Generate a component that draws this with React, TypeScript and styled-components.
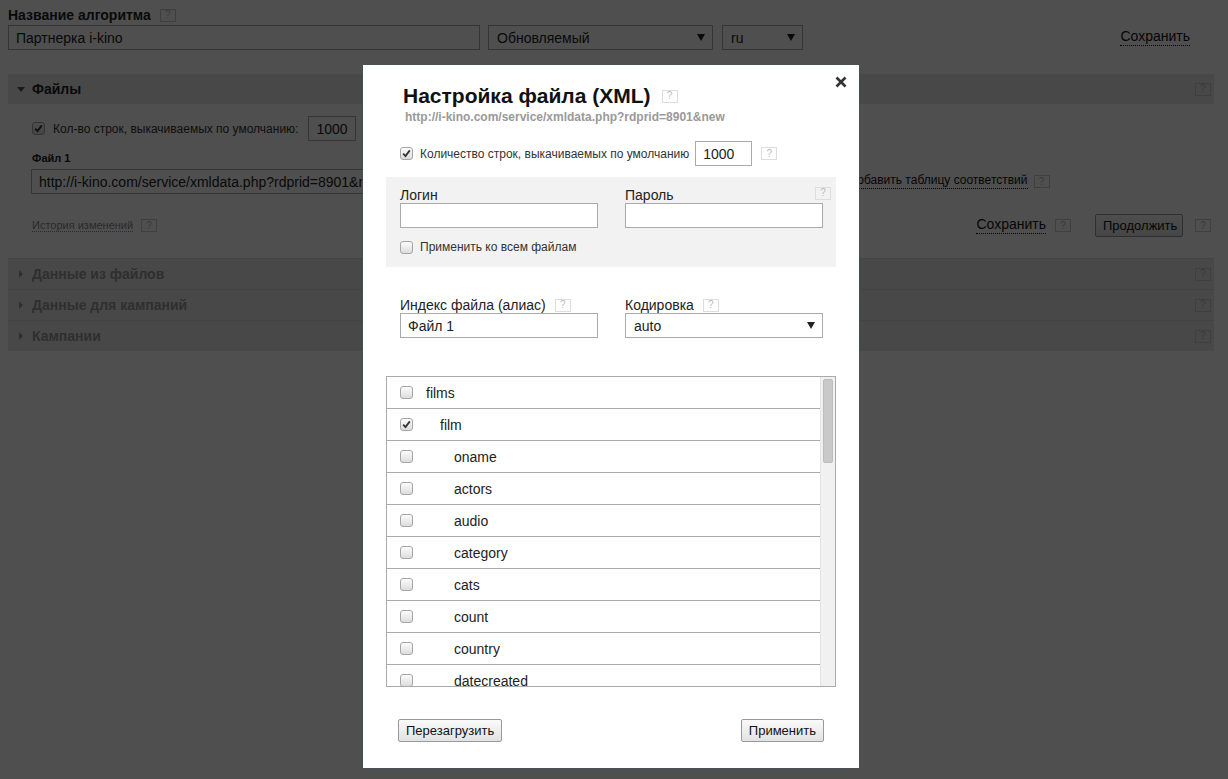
import styled, { createGlobalStyle } from "styled-components";

const Global = createGlobalStyle`
	html, body {
		margin: 0;
		padding: 0;
		background: #fff;
	}
	body {
		font-family: "Liberation Sans", Arial, sans-serif;
		color: #000;
	}
`;

const Page = styled.div`
	position: relative;
	width: 1228px;
	height: 779px;
	overflow: hidden;
	box-sizing: border-box;
	padding: 6px 14px 0 8px;
	background: #fff;
`;

const FieldTitle = styled.div`
	display: flex;
	align-items: center;
	gap: 9px;
	font-size: 14px;
	font-weight: bold;
	line-height: 18px;
	color: #222;
`;

const Help = styled.span<{ $light?: boolean }>`
	display: inline-flex;
	align-items: center;
	justify-content: center;
	box-sizing: border-box;
	width: 16px;
	height: 13px;
	border: 1px solid ${(p) => (p.$light ? "#ddd" : "#ccc")};
	font-size: 10px;
	line-height: 1;
	font-weight: normal;
	color: #bbb;
	flex-shrink: 0;
`;

const AlgoRow = styled.div`
	display: flex;
	align-items: center;
	margin-top: 1px;
	gap: 8px;
`;

const TextInput = styled.div<{ $w: number; $size?: number }>`
	box-sizing: border-box;
	width: ${(p) => p.$w}px;
	height: 25px;
	border: 1px solid #aaa;
	background: #fff;
	padding: 0 7px;
	display: flex;
	align-items: center;
	font-size: ${(p) => p.$size || 14}px;
	color: #222;
	white-space: nowrap;
	overflow: hidden;
	flex-shrink: 0;
`;

const Select = styled(TextInput)`
	justify-content: space-between;
	padding: 0 7px 0 8px;
	&::after {
		content: "";
		border-left: 4px solid transparent;
		border-right: 4px solid transparent;
		border-top: 7px solid #222;
	}
`;

const DottedLink = styled.span<{ $size?: number; $gray?: boolean }>`
	font-size: ${(p) => p.$size || 14}px;
	color: ${(p) => (p.$gray ? "#888" : "#111")};
	border-bottom: 1px dotted ${(p) => (p.$gray ? "#888" : "#111")};
	line-height: 1.1;
	white-space: nowrap;
`;

const Spacer = styled.div`
	flex: 1;
`;

const SectionBar = styled.div<{ $open?: boolean }>`
	box-sizing: border-box;
	height: ${(p) => (p.$open ? 30 : 31)}px;
	background: #e8e8e8;
	border-top: ${(p) => (p.$open ? "none" : "1px solid #d8d8d8")};
	display: flex;
	align-items: center;
	padding: 0 3px 0 9px;
	gap: 7px;
	font-size: 14px;
	font-weight: bold;
	color: ${(p) => (p.$open ? "#222" : "#999")};
`;

const Arrow = styled.span<{ $open?: boolean }>`
	width: 8px;
	display: inline-flex;
	justify-content: center;
	&::before {
		content: "";
		${(p) =>
			p.$open
				? "border-left: 4px solid transparent; border-right: 4px solid transparent; border-top: 5px solid #555;"
				: "border-top: 4px solid transparent; border-bottom: 4px solid transparent; border-left: 4px solid #999;"}
	}
`;

const SectionsWrap = styled.div`
	margin-top: 24px;
`;

const FilesBody = styled.div`
	padding: 12px 3px 21px 24px;
`;

const Row = styled.div<{ $gap?: number; $mt?: number }>`
	display: flex;
	align-items: center;
	gap: ${(p) => p.$gap ?? 8}px;
	margin-top: ${(p) => p.$mt ?? 0}px;
`;

const SmallLabel = styled.span<{ $color?: string }>`
	font-size: 12px;
	color: ${(p) => p.$color || "#333"};
	white-space: nowrap;
`;

const FileLabel = styled.div`
	font-size: 11px;
	font-weight: bold;
	color: #222;
	margin-top: 10px;
	line-height: 14px;
`;

const Box = styled.span`
	box-sizing: border-box;
	width: 13px;
	height: 13px;
	border: 1px solid #a6a6a6;
	border-radius: 3px;
	background: linear-gradient(#fcfcfc, #dcdcdc);
	display: inline-flex;
	align-items: center;
	justify-content: center;
	flex-shrink: 0;
`;

function Check({ checked }: { checked?: boolean }) {
	return (
		<Box>
			{checked && (
				<svg width="9" height="9" viewBox="0 0 9 9">
					<path d="M1.2 4.6 L3.5 7 L7.8 1.4" fill="none" stroke="#333" strokeWidth="1.8" />
				</svg>
			)}
		</Box>
	);
}

const Button = styled.button<{ $w?: number }>`
	box-sizing: border-box;
	height: 23px;
	${(p) => (p.$w ? `width: ${p.$w}px;` : "")}
	padding: 0 7px;
	border: 1px solid #999;
	border-radius: 2px;
	background: linear-gradient(#fafafa, #e2e2e2);
	font-family: "Liberation Sans", Arial, sans-serif;
	font-size: 13px;
	color: #111;
	white-space: nowrap;
`;

const Overlay = styled.div`
	position: absolute;
	inset: 0;
	background: rgba(0, 0, 0, 0.69);
`;

const Modal = styled.div`
	position: absolute;
	left: 363px;
	top: 65px;
	width: 496px;
	height: 703px;
	box-sizing: border-box;
	background: #fff;
	box-shadow: 0 0 0 1px rgba(70, 80, 90, 0.6);
	padding: 19px 23px 0 23px;
`;

const Close = styled.span`
	position: absolute;
	right: 12px;
	top: 9px;
	width: 12px;
	height: 12px;
`;

const ModalTitle = styled.div`
	display: flex;
	align-items: center;
	gap: 11px;
	padding-left: 17px;
	font-size: 21px;
	font-weight: bold;
	line-height: 24px;
	color: #111;
`;

const ModalUrl = styled.div`
	margin-top: 2px;
	padding-left: 19px;
	font-size: 12px;
	font-weight: bold;
	color: #999;
	line-height: 14px;
`;

const GrayBox = styled.div`
	margin-top: 11px;
	background: #f2f2f2;
	height: 90px;
	box-sizing: border-box;
	padding: 10px 13px 0 14px;
	position: relative;
`;

const Corner = styled.div`
	position: absolute;
	right: 5px;
	top: 5px;
`;

const Fields = styled.div`
	display: grid;
	grid-template-columns: 198px 198px;
	column-gap: 27px;
`;

const Field = styled.div`
	display: flex;
	flex-direction: column;
`;

const FieldLabel = styled.div`
	display: flex;
	align-items: center;
	gap: 9px;
	font-size: 14px;
	color: #222;
	line-height: 16px;
`;

const ListBox = styled.div`
	margin-top: 38px;
	height: 311px;
	box-sizing: border-box;
	border: 1px solid #aaa;
	display: flex;
	overflow: hidden;
`;

const Rows = styled.div`
	flex: 1;
	overflow: hidden;
`;

const ListRow = styled.div<{ $level: number }>`
	box-sizing: border-box;
	height: 32px;
	border-bottom: 1px solid #aaa;
	display: flex;
	align-items: center;
	padding-left: 13px;
	font-size: 14px;
	color: #222;
	span:last-child {
		margin-left: ${(p) => 13 + p.$level * 14}px;
	}
`;

const Scroll = styled.div`
	width: 15px;
	background: #f1f1f1;
	border-left: 1px solid #e3e3e3;
	padding: 2px 2px 0 2px;
	box-sizing: border-box;
	&::before {
		content: "";
		display: block;
		height: 84px;
		background: #c9c9c9;
		border: 1px solid #bcbcbc;
		border-radius: 2px;
		box-sizing: border-box;
	}
`;

const ButtonRow = styled.div`
	display: flex;
	justify-content: space-between;
	margin-top: 32px;
	padding: 0 12px;
`;

const items: [string, number, boolean][] = [
	["films", 0, false],
	["film", 1, true],
	["oname", 2, false],
	["actors", 2, false],
	["audio", 2, false],
	["category", 2, false],
	["cats", 2, false],
	["count", 2, false],
	["country", 2, false],
	["datecreated", 2, false],
];

const collapsed = ["Данные из файлов", "Данные для кампаний", "Кампании"];

export default function App() {
	return (
		<Page>
			<Global />
			<FieldTitle>
				Название алгоритма <Help>?</Help>
			</FieldTitle>
			<AlgoRow>
				<TextInput $w={472}>Партнерка i-kino</TextInput>
				<Select $w={225}>Обновляемый</Select>
				<Select $w={81} style={{ marginLeft: 1 }}>
					ru
				</Select>
				<Spacer />
				<DottedLink style={{ marginRight: 24 }}>Сохранить</DottedLink>
			</AlgoRow>

			<SectionsWrap>
				<SectionBar $open>
					<Arrow $open />
					Файлы
					<Spacer />
					<Help>?</Help>
				</SectionBar>
				<FilesBody>
					<Row>
						<Check checked />
						<SmallLabel>Кол-во строк, выкачиваемых по умолчанию:</SmallLabel>
						<TextInput $w={48} style={{ marginLeft: 2 }}>
							1000
						</TextInput>
					</Row>
					<FileLabel>Файл 1</FileLabel>
					<Row $mt={4} $gap={18}>
						<TextInput $w={800} style={{ marginLeft: -1 }}>
							http://i-kino.com/service/xmldata.php?rdprid=8901&amp;new
						</TextInput>
						<DottedLink $size={12}>Добавить таблицу соответствий</DottedLink>
						<Help style={{ marginLeft: -12 }}>?</Help>
					</Row>
					<Row $mt={20}>
						<DottedLink $size={11} $gray>
							История изменений
						</DottedLink>
						<Help>?</Help>
						<Spacer />
						<DottedLink>Сохранить</DottedLink>
						<Help style={{ marginLeft: 1 }}>?</Help>
						<Button $w={88} style={{ marginLeft: 16, marginRight: 4 }}>
							Продолжить
						</Button>
						<Help>?</Help>
					</Row>
				</FilesBody>
				{collapsed.map((t) => (
					<SectionBar key={t}>
						<Arrow />
						{t}
						<Spacer />
						<Help>?</Help>
					</SectionBar>
				))}
			</SectionsWrap>

			<Overlay />

			<Modal>
				<Close>
					<svg width="12" height="12" viewBox="0 0 12 12">
						<path d="M1.5 1.5 L10.5 10.5 M10.5 1.5 L1.5 10.5" stroke="#333" strokeWidth="2.6" />
					</svg>
				</Close>
				<ModalTitle>
					Настройка файла (XML) <Help $light>?</Help>
				</ModalTitle>
				<ModalUrl>http://i-kino.com/service/xmldata.php?rdprid=8901&amp;new</ModalUrl>
				<Row $mt={17} style={{ paddingLeft: 14 }} $gap={0}>
					<Check checked />
					<SmallLabel style={{ marginLeft: 7, marginRight: 6 }}>
						Количество строк, выкачиваемых по умолчанию
					</SmallLabel>
					<TextInput $w={57} $size={14}>
						1000
					</TextInput>
					<Help $light style={{ marginLeft: 9 }}>
						?
					</Help>
				</Row>
				<GrayBox>
					<Corner>
						<Help $light>?</Help>
					</Corner>
					<Fields>
						<Field>
							<FieldLabel>Логин</FieldLabel>
							<TextInput $w={198} />
						</Field>
						<Field>
							<FieldLabel>Пароль</FieldLabel>
							<TextInput $w={198} />
						</Field>
					</Fields>
					<Row $mt={12} $gap={7}>
						<Check />
						<SmallLabel>Применить ко всем файлам</SmallLabel>
					</Row>
				</GrayBox>
				<Fields style={{ marginTop: 30, paddingLeft: 14 }}>
					<Field>
						<FieldLabel>
							Индекс файла (алиас) <Help $light>?</Help>
						</FieldLabel>
						<TextInput $w={198}>Файл 1</TextInput>
					</Field>
					<Field>
						<FieldLabel>
							Кодировка <Help $light>?</Help>
						</FieldLabel>
						<Select $w={198}>auto</Select>
					</Field>
				</Fields>
				<ListBox>
					<Rows>
						{items.map(([name, level, checked]) => (
							<ListRow key={name} $level={level}>
								<Check checked={checked} />
								<span>{name}</span>
							</ListRow>
						))}
					</Rows>
					<Scroll />
				</ListBox>
				<ButtonRow>
					<Button>Перезагрузить</Button>
					<Button>Применить</Button>
				</ButtonRow>
			</Modal>
		</Page>
	);
}
